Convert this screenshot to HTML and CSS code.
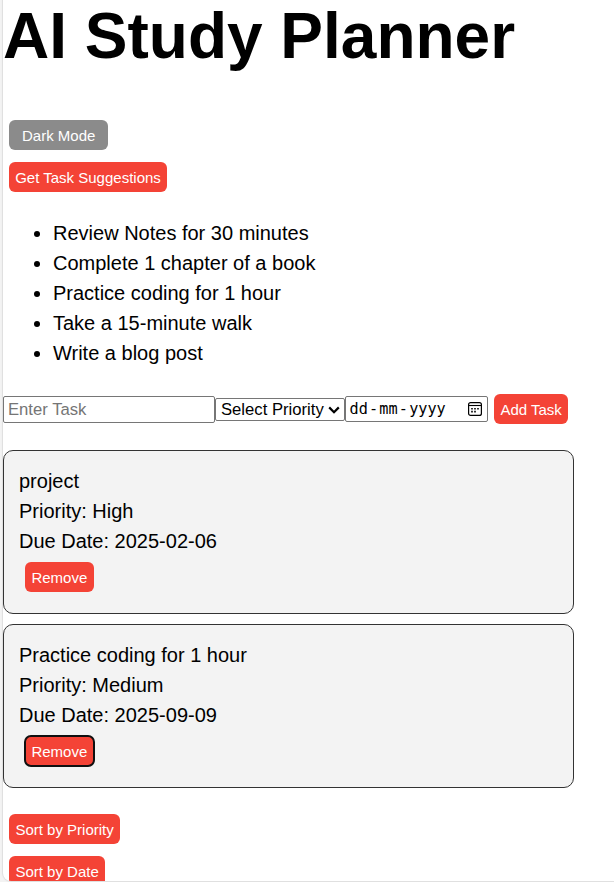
FILE: index.html
```html
<!DOCTYPE html>
<html lang="en">
<head>
<meta charset="utf-8">
<title>AI Study Planner</title>
<link rel="stylesheet" href="styles.css">
</head>
<body>
<main class="page">
  <h1 class="title">AI Study Planner</h1>
  <div class="actions">
    <button class="btn btn-mode">Dark Mode</button>
    <button class="btn btn-suggest">Get Task Suggestions</button>
  </div>
  <ul class="suggestions">
    <li>Review Notes for 30 minutes</li>
    <li>Complete 1 chapter of a book</li>
    <li>Practice coding for 1 hour</li>
    <li>Take a 15-minute walk</li>
    <li>Write a blog post</li>
  </ul>
  <div class="task-form">
    <input class="field task-input" type="text" placeholder="Enter Task">
    <div class="field priority" role="combobox" tabindex="0">
      <span>Select Priority</span>
      <svg class="chevron" width="12" height="8" viewBox="0 0 12 8"><path d="M1.2 1.4 6 6.2l4.8-4.8" fill="none" stroke="#000" stroke-width="2.2"/></svg>
    </div>
    <div class="field date" tabindex="0">
      <span class="date-text"><span>dd</span><span class="dash">-</span><span>mm</span><span class="dash">-</span><span>yyyy</span></span>
      <svg width="14" height="14" viewBox="0 0 14 14"><rect x=".6" y=".6" width="12.8" height="12.8" rx="2" fill="none" stroke="#000" stroke-width="1.2"/><path d="M1 3.5h12" stroke="#000" stroke-width="1.1"/><path d="M6.2 6.8h1.6M9.2 6.8h1.6M3.2 6.8h1.6M3.2 9.6h1.6M6.2 9.6h1.6" stroke="#000" stroke-width="1.6"/></svg>
    </div>
    <button class="btn btn-add">Add Task</button>
  </div>
  <section class="tasks">
    <article class="task">
      <div>project</div>
      <div>Priority: High</div>
      <div>Due Date: 2025-02-06</div>
      <button class="btn">Remove</button>
    </article>
    <article class="task">
      <div>Practice coding for 1 hour</div>
      <div>Priority: Medium</div>
      <div>Due Date: 2025-09-09</div>
      <button class="btn btn-focused">Remove</button>
    </article>
  </section>
  <div class="actions sorting">
    <button class="btn">Sort by Priority</button>
    <button class="btn">Sort by Date</button>
  </div>
</main>
</body>
</html>
```

FILE: styles.css
```css
* { box-sizing: border-box; }
html { height: 100%; overflow: hidden; }
body {
  margin: 0;
  height: 100%;
  overflow: hidden;
  padding-left: 3px;
  background: #f3f3f3;
  color: #000;
  font: 20px/30px "Liberation Sans", Arial, sans-serif;
}
.page {
  height: 881px;
  overflow: hidden;
  background: #fff;
  border-bottom-left-radius: 8px;
  box-shadow: 0 0 1px 1px #dedede;
}
.title {
  margin: 0;
  height: 114px;
  font-size: 64px;
  line-height: 72px;
  font-weight: bold;
  white-space: nowrap;
}
.actions {
  display: flex;
  flex-direction: column;
  align-items: flex-start;
}
.btn {
  display: block;
  height: 30px;
  margin: 6px;
  padding: 1px 6.4px 0;
  border: 0;
  border-radius: 6px;
  background: #f44336;
  color: #fff;
  font: 15px/29px "Liberation Sans", Arial, sans-serif;
  white-space: nowrap;
}
.btn-mode { padding: 1px 13px 0; background: #8b8b8b; }
.btn-suggest { padding: 1px 6.2px 0; }
.btn-focused { outline: 2px solid #101010; outline-offset: -1px; }
.suggestions { margin: 20px 0 26px; padding-left: 50px; }
.task-form { display: flex; align-items: center; height: 30px; }
.field {
  border: 1px solid #767676;
  border-radius: 2px;
  background: #fff;
  color: #000;
  font: 16.667px/20px "Liberation Sans", Arial, sans-serif;
}
.task-input { width: 212px; height: 27px; padding: 2px 4px 0; outline: 0; }
.task-input::placeholder { color: #757575; opacity: 1; }
.priority {
  display: flex;
  align-items: center;
  justify-content: space-between;
  width: 130px;
  height: 23px;
  padding: 1px 4px 0 5px;
  white-space: nowrap;
}
.date {
  display: flex;
  align-items: center;
  justify-content: space-between;
  width: 143px;
  height: 26px;
  padding: 0 5px 0 3.5px;
}
.date-text { font-family: "DejaVu Sans Mono", monospace; font-size: 15.2px; }
.dash { padding: 0 1.2px; }
.btn-add { margin: 0 6px; }
.tasks { display: grid; gap: 10px; width: 571px; margin-top: 26px; }
.task {
  height: 164px;
  padding: 15px;
  border: 1px solid #333;
  border-radius: 10px;
  background: #f3f3f3;
}
.sorting { margin-top: 20px; }
.actions .btn + .btn { margin-top: 6px; }
```
